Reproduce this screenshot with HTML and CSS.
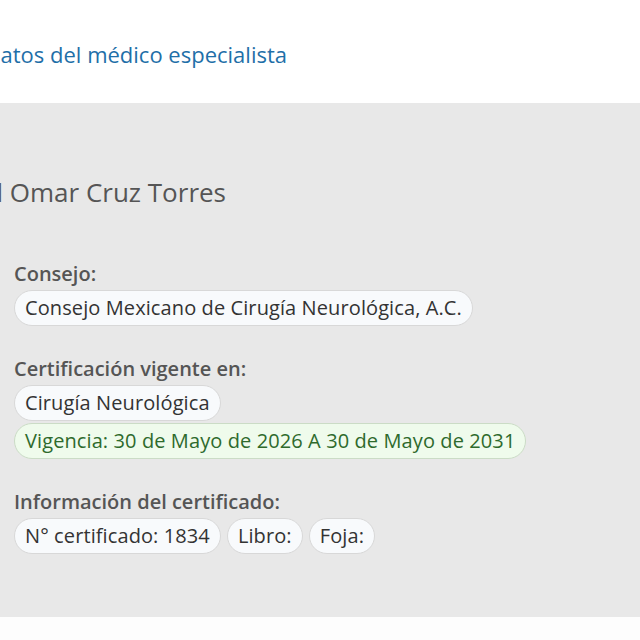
FILE: index.html
```html
<!DOCTYPE html>
<html lang="es">
<head>
    <meta charset="UTF-8">
    <meta name="viewport" content="width=device-width, initial-scale=1.0">
    <title>Datos del médico especialista</title>
    <link rel="stylesheet" href="styles.css">
</head>
<body>
    <header class="page-header">
        <h2 class="page-title"><span>Datos del médico especialista</span></h2>
    </header>

    <section class="doctor-card">
        <h1 class="doctor-name"><span>Dr. Manuel Omar Cruz Torres</span></h1>

        <div class="field">
            <h3 class="field-label">Consejo:</h3>
            <div class="chips">
                <span class="chip">Consejo Mexicano de Cirugía Neurológica, A.C.</span>
            </div>
        </div>

        <div class="field">
            <h3 class="field-label">Certificación vigente en:</h3>
            <div class="chips">
                <span class="chip">Cirugía Neurológica</span>
                <span class="chip chip-valid">Vigencia: 30 de Mayo de 2026 A 30 de Mayo de 2031</span>
            </div>
        </div>

        <div class="field">
            <h3 class="field-label">Información del certificado:</h3>
            <div class="chips chips-row">
                <span class="chip">N° certificado: 1834</span>
                <span class="chip">Libro:</span>
                <span class="chip">Foja:</span>
            </div>
        </div>
    </section>
</body>
</html>
```

FILE: styles.css
```css
* {
    margin: 0;
    padding: 0;
    box-sizing: border-box;
}

html, body {
    overflow: hidden;
}

body {
    background: #fdfdfd;
    font-family: 'Open Sans', 'Liberation Sans', sans-serif;
    color: #333;
}

/* the page is scrolled sideways: title and name run past the left edge */
.page-title,
.doctor-name {
    display: flex;
    justify-content: flex-end;
    white-space: nowrap;
}

.page-header {
    height: 103px;
    background: #fff;
    padding-top: 40px;
}

.page-title {
    width: 287px;
    font-size: 22px;
    line-height: 28px;
    font-weight: 500;
    color: #1f6fa8;
}

.doctor-card {
    background: #e8e8e8;
    padding: 74px 14px 63px;
}

.doctor-name {
    width: 226px;
    margin-left: -14px;
    font-size: 26px;
    line-height: 30px;
    font-weight: 500;
    color: #555;
    margin-bottom: 55px;
}

.field {
    margin-bottom: 31px;
}

.field:last-child {
    margin-bottom: 0;
}

.field-label {
    font-size: 20px;
    line-height: 24px;
    font-weight: 600;
    color: #555;
    margin-bottom: 4px;
}

.chips {
    display: flex;
    flex-direction: column;
    align-items: flex-start;
    gap: 2px;
}

.chips-row {
    flex-direction: row;
    gap: 6px;
}

.chip {
    display: inline-block;
    padding: 5px 10px;
    font-size: 20px;
    line-height: 24px;
    letter-spacing: 0.1px;
    color: #333;
    background: #f8fafc;
    border: 1px solid #d8d8d8;
    border-radius: 18px;
}

.chip-valid {
    color: #2e6a2c;
    background: #effbec;
    border-color: #cbdcc6;
}
```
